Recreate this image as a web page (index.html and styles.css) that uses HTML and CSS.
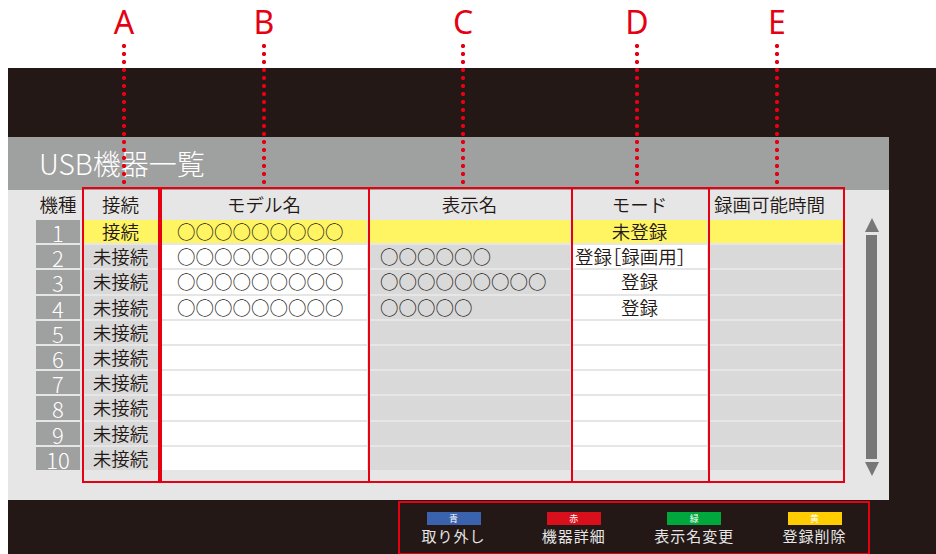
FILE: index.html
```html
<!DOCTYPE html>
<html lang="ja">
<head>
	<meta charset="utf-8" />
	<title>USB機器一覧</title>
	<link rel="stylesheet" href="styles.css">
</head>
<body>

	<div class="marks">
		<div class="mark mark-a"><span class="mark-letter">A</span><span class="mark-dots"></span></div>
		<div class="mark mark-b"><span class="mark-letter">B</span><span class="mark-dots"></span></div>
		<div class="mark mark-c"><span class="mark-letter">C</span><span class="mark-dots"></span></div>
		<div class="mark mark-d"><span class="mark-letter">D</span><span class="mark-dots"></span></div>
		<div class="mark mark-e"><span class="mark-letter">E</span><span class="mark-dots"></span></div>
	</div>

	<div class="screen">

		<section class="panel">
			<h1 class="panel-title">USB機器一覧</h1>
			<div class="panel-body">

				<div class="table">
					<div class="devices">
						<!-- header -->
						<div class="cell head">機種</div>
						<div class="cell head">接続</div>
						<div class="cell head">モデル名</div>
						<div class="cell head">表示名</div>
						<div class="cell head">モード</div>
						<div class="cell head head-time">録画可能時間</div>
						<!-- 1 -->
						<div class="cell num">1</div>
						<div class="cell yellow">接続</div>
						<div class="cell yellow model">○○○○○○○○○</div>
						<div class="cell yellow name"></div>
						<div class="cell yellow">未登録</div>
						<div class="cell yellow"></div>
						<!-- 2 -->
						<div class="cell num">2</div>
						<div class="cell gray">未接続</div>
						<div class="cell white model">○○○○○○○○○</div>
						<div class="cell gray name">○○○○○○</div>
						<div class="cell white mode-rec">登録［録画用］</div>
						<div class="cell gray"></div>
						<!-- 3 -->
						<div class="cell num">3</div>
						<div class="cell gray">未接続</div>
						<div class="cell white model">○○○○○○○○○</div>
						<div class="cell gray name">○○○○○○○○○</div>
						<div class="cell white">登録</div>
						<div class="cell gray"></div>
						<!-- 4 -->
						<div class="cell num">4</div>
						<div class="cell gray">未接続</div>
						<div class="cell white model">○○○○○○○○○</div>
						<div class="cell gray name">○○○○○</div>
						<div class="cell white">登録</div>
						<div class="cell gray"></div>
						<!-- 5 -->
						<div class="cell num">5</div>
						<div class="cell gray">未接続</div>
						<div class="cell white"></div>
						<div class="cell gray"></div>
						<div class="cell white"></div>
						<div class="cell gray"></div>
						<!-- 6 -->
						<div class="cell num">6</div>
						<div class="cell gray">未接続</div>
						<div class="cell white"></div>
						<div class="cell gray"></div>
						<div class="cell white"></div>
						<div class="cell gray"></div>
						<!-- 7 -->
						<div class="cell num">7</div>
						<div class="cell gray">未接続</div>
						<div class="cell white"></div>
						<div class="cell gray"></div>
						<div class="cell white"></div>
						<div class="cell gray"></div>
						<!-- 8 -->
						<div class="cell num">8</div>
						<div class="cell gray">未接続</div>
						<div class="cell white"></div>
						<div class="cell gray"></div>
						<div class="cell white"></div>
						<div class="cell gray"></div>
						<!-- 9 -->
						<div class="cell num">9</div>
						<div class="cell gray">未接続</div>
						<div class="cell white"></div>
						<div class="cell gray"></div>
						<div class="cell white"></div>
						<div class="cell gray"></div>
						<!-- 10 -->
						<div class="cell num">10</div>
						<div class="cell gray">未接続</div>
						<div class="cell white"></div>
						<div class="cell gray"></div>
						<div class="cell white"></div>
						<div class="cell gray"></div>
					</div>

					<!-- red annotation frame -->
					<div class="frame">
						<div class="frame-box frame-a"></div>
						<div class="frame-box frame-rest">
							<div class="frame-col frame-b"></div>
							<div class="frame-col frame-c"></div>
							<div class="frame-col frame-d"></div>
							<div class="frame-col frame-e"></div>
						</div>
					</div>
				</div>

				<div class="scroll">
					<span class="scroll-up"></span>
					<span class="scroll-bar"></span>
					<span class="scroll-down"></span>
				</div>

			</div>
		</section>

		<footer class="footer">
			<div class="keys">
				<div class="key">
					<span class="key-color blue">青</span>
					<span class="key-label">取り外し</span>
				</div>
				<div class="key">
					<span class="key-color red">赤</span>
					<span class="key-label">機器詳細</span>
				</div>
				<div class="key">
					<span class="key-color green">緑</span>
					<span class="key-label">表示名変更</span>
				</div>
				<div class="key">
					<span class="key-color yellow-key">黄</span>
					<span class="key-label">登録削除</span>
				</div>
			</div>
		</footer>

	</div>

</body>
</html>
```

FILE: styles.css
```css
* {
	box-sizing: border-box;
}

html, body {
	margin: 0;
	padding: 0;
}

body {
	position: relative;
	width: 936px;
	height: 554px;
	overflow: hidden;
	background: #ffffff;
	color: #231815;
	font-family: "Noto Sans CJK JP", "Noto Sans", sans-serif;
}


/*Marks*/
.marks {
	position: absolute;
	top: 0;
	left: 0;
	z-index: 10;
}
.mark {
	position: absolute;
	top: 0;
	width: 30px;
	display: flex;
	flex-direction: column;
	align-items: center;
}
.mark-a { left: 109px; }
.mark-b { left: 249px; }
.mark-c { left: 448px; }
.mark-d { left: 622px; }
.mark-e { left: 762px; }
.mark-letter {
	font-family: "Noto Sans", sans-serif;
	font-size: 32px;
	line-height: 44px;
	color: #e50012;
}
.mark-dots {
	width: 4px;
	height: 146px;
	margin-top: -2px;
	background: radial-gradient(circle, #e50012 1.9px, transparent 2.3px) 0 0 / 4px 8px repeat-y;
}


/*Screen*/
.screen {
	margin: 68px 0 0 8px;
	height: 486px;
	padding-top: 69px;
	background: #231815;
}

.panel {
	width: 881px;
	height: 363px;
	background: #e6e6e6;
}
.panel-title {
	margin: 0;
	height: 53px;
	padding-left: 31px;
	background: #9fa0a0;
	color: #ffffff;
	font-size: 28px;
	font-weight: 300;
	line-height: 53px;
}
.panel-body {
	display: flex;
	padding-left: 28px;
}


/*Table*/
.table {
	position: relative;
	width: 807px;
}
.devices {
	display: grid;
	grid-template-columns: 44px 77px 206px 201px 135px 134px;
	grid-template-rows: 28px;
	grid-auto-rows: 23.2px;
	gap: 2px;
}
.cell {
	font-size: 18.5px;
	font-weight: 350;
	line-height: 23px;
	text-align: center;
	white-space: nowrap;
}
.head {
	line-height: 29px;
}
.head-time {
	text-align: left;
	padding-left: 5px;
}
.num {
	background: #9fa0a0;
	color: #ffffff;
	font-size: 22px;
	font-weight: 300;
	line-height: 24px;
}
.gray {
	background: #d9d9d9;
}
.white {
	background: #ffffff;
}
.yellow {
	background: #fff462;
}
.model {
	text-align: left;
	padding-left: 16px;
}
.name {
	text-align: left;
	padding-left: 11px;
}
.mode-rec {
	text-align: left;
	padding-left: 3px;
	font-feature-settings: "halt";
}

.frame {
	position: absolute;
	left: 46px;
	right: -2px;
	top: -3px;
	bottom: -7px;
	display: flex;
	pointer-events: none;
}
.frame-box {
	border: 2px solid #e50012;
}
.frame-a {
	width: 78px;
}
.frame-rest {
	flex: 1;
	display: flex;
	border-left: none;
}
.frame-col {
	border-left: 2px solid #e50012;
}
.frame-b { width: 208px; }
.frame-c { width: 203px; }
.frame-d { width: 137px; }
.frame-e { flex: 1; }


/*Scroll*/
.scroll {
	width: 15px;
	margin: 28px 0 0 21px;
	display: flex;
	flex-direction: column;
	align-items: center;
}
.scroll-up {
	border-left: 7.5px solid transparent;
	border-right: 7.5px solid transparent;
	border-bottom: 14px solid #777777;
}
.scroll-bar {
	width: 11px;
	height: 224px;
	margin: 3px 0;
	background: #777777;
}
.scroll-down {
	border-left: 7.5px solid transparent;
	border-right: 7.5px solid transparent;
	border-top: 14px solid #777777;
}


/*Footer*/
.footer {
	padding: 1px 0 0 390px;
}
.keys {
	width: 472px;
	height: 54px;
	padding-top: 9px;
	border: 2px solid #e50012;
	display: flex;
	gap: 13.3px;
}
.key {
	width: 108px;
	display: flex;
	flex-direction: column;
	align-items: center;
}
.key-color {
	width: 54px;
	height: 13px;
	color: #ffffff;
	font-size: 9px;
	line-height: 13px;
	text-align: center;
}
.blue { background: #3a62ad; }
.red { background: #d7101b; }
.green { background: #00a73c; }
.yellow-key { background: #ffcc00; }
.key-label {
	margin-top: 1px;
	color: #e5e5e5;
	font-size: 15px;
	line-height: 20px;
	letter-spacing: 1px;
}
```
